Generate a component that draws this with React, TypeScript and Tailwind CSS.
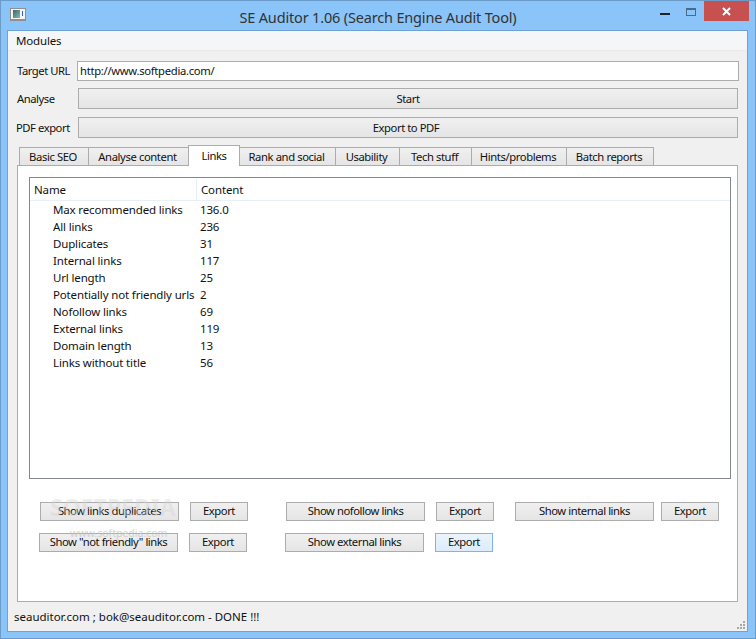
const rows = [
  ["Max recommended links", "136.0"],
  ["All links", "236"],
  ["Duplicates", "31"],
  ["Internal links", "117"],
  ["Url length", "25"],
  ["Potentially not friendly urls", "2"],
  ["Nofollow links", "69"],
  ["External links", "119"],
  ["Domain length", "13"],
  ["Links without title", "56"],
];

const tabs = [
  { label: "Basic SEO", width: "w-[70px]" },
  { label: "Analyse content", width: "w-[101px]" },
  { label: "Links", width: "w-[52px]", active: true },
  { label: "Rank and social", width: "w-[97px]" },
  { label: "Usability", width: "w-[65px]" },
  { label: "Tech stuff", width: "w-[73px]" },
  { label: "Hints/problems", width: "w-[96px]" },
  { label: "Batch reports", width: "w-[88px]" },
];

function Btn({ label, className, hot }: { label: string; className: string; hot?: boolean }) {
  return (
    <button
      className={
        "shrink-0 flex items-center justify-center border whitespace-nowrap text-[11.25px] tracking-[-0.45px] " +
        (hot
          ? "border-[#7eb4ea] bg-gradient-to-b from-[#ecf4fc] to-[#dcecfc] "
          : "border-[#acacac] bg-gradient-to-b from-[#f0f0f0] to-[#e5e5e5] ") +
        className
      }
    >
      {label}
    </button>
  );
}

export default function App() {
  return (
    <div className="w-[756px] h-[639px] flex flex-col overflow-hidden bg-[#8ac4f8] border border-[#6b9cc9] text-[11.5px] tracking-[-0.15px] leading-[16px] text-[#111] font-['Noto_Sans','Open_Sans',sans-serif]">
      <div className="h-[29px] shrink-0 grid grid-cols-[1fr_auto_1fr] items-start">
        <div className="ml-[9px] mt-[7px] w-[16px] h-[13px] border border-[#8f8f8f] border-b-2 bg-[#f4f4f4] flex items-center justify-between px-[2px]">
          <div className="w-[7px] h-[8px] bg-gradient-to-br from-[#2c6e6a] to-[#8fb5b0]" />
          <div className="w-[1px] h-[5px] bg-[#3a62c0] mb-[2px]" />
        </div>
        <div className="text-center text-[14.5px] tracking-[-0.17px] leading-[20px] mt-[6px] text-[#333]">
          SE Auditor 1.06 (Search Engine Audit Tool)
        </div>
        <div className="flex justify-end items-start">
          <div className="w-[10px] h-[2px] bg-[#222] mt-[12px] mr-[16px]" />
          <div className="w-[10px] h-[8px] mt-[7px] mr-[8px] border border-[#4a6a8a] border-t-2" />
          <div className="w-[45px] h-[20px] mr-[6px] bg-[#c75050] flex items-center justify-center">
            <svg width="9" height="9" viewBox="0 0 9 9">
              <path d="M1 1l7 7M8 1l-7 7" stroke="#fff" strokeWidth="2" />
            </svg>
          </div>
        </div>
      </div>

      <div className="ml-[6px] mr-[7px] mb-[6px] flex-1 flex flex-col border border-[#6fa3d4] bg-[#f0f0f0]">
        <div className="h-[20px] shrink-0 bg-[#f5f6f7] border-b border-[#e8e9ea] pl-[8px] flex items-center">
          Modules
        </div>

        <div className="h-[20px] mt-[10px] flex items-center shrink-0 text-[11.25px] tracking-[-0.45px]">
          <div className="ml-[9px] w-[60px] whitespace-nowrap">Target URL</div>
          <div className="w-[662px] h-[20px] border border-[#acacac] bg-white pl-[2px] flex items-center tracking-[-0.3px]">
            http://www.softpedia.com/
          </div>
        </div>
        <div className="h-[21px] mt-[7px] flex items-center shrink-0 text-[11.25px] tracking-[-0.45px]">
          <div className="ml-[9px] w-[61px] whitespace-nowrap">Analyse</div>
          <Btn label="Start" className="w-[660px] h-[21px]" />
        </div>
        <div className="h-[21px] mt-[8px] flex items-center shrink-0 text-[11.25px] tracking-[-0.45px]">
          <div className="ml-[8px] w-[62px] whitespace-nowrap">PDF export</div>
          <Btn label="Export to PDF" className="w-[660px] h-[21px] pr-[4px]" />
        </div>

        <div className="mt-[7px] ml-[11px] flex items-end h-[21px] shrink-0 text-[11.25px] tracking-[-0.4px]">
          {tabs.map((t) => (
            <div
              key={t.label}
              className={
                "shrink-0 flex items-center justify-center border border-[#acacac] -mr-[1px] whitespace-nowrap " +
                t.width +
                (t.active
                  ? " h-[21px] bg-white border-b-0 relative z-10"
                  : " h-[19px] pr-[2px] bg-gradient-to-b from-[#f0f0f0] to-[#e5e5e5]")
              }
            >
              {t.label}
            </div>
          ))}
        </div>

        <div className="ml-[9px] -mt-[1px] w-[721px] h-[437px] shrink-0 border border-[#acacac] bg-white flex flex-col">
          <div className="mt-[11px] ml-[11px] w-[702px] h-[302px] shrink-0 border border-[#828790] bg-white">
            <div className="h-[23px] flex border-b border-[#e5f0fb] pt-[1px]">
              <div className="w-[167px] pl-[4px] flex items-center border-r border-[#e5f0fb]">Name</div>
              <div className="pl-[4px] flex items-center">Content</div>
            </div>
            <div>
              {rows.map(([name, value]) => (
                <div key={name} className="h-[17px] flex items-center">
                  <div className="w-[170px] pl-[23px] whitespace-nowrap">{name}</div>
                  <div>{value}</div>
                </div>
              ))}
            </div>
          </div>

          <div className="relative">
            <div className="mt-[23px] flex h-[19px]">
              <Btn label="Show links duplicates" className="ml-[22px] w-[139px] pb-[1px]" />
              <Btn label="Export" className="ml-[11px] w-[58px] pb-[1px]" />
              <Btn label="Show nofollow links" className="ml-[38px] w-[139px] pb-[1px]" />
              <Btn label="Export" className="ml-[11px] w-[58px] pb-[1px]" />
              <Btn label="Show internal links" className="ml-[21px] w-[139px] pb-[1px]" />
              <Btn label="Export" className="ml-[7px] w-[58px] pb-[1px]" />
            </div>
            <div className="mt-[12px] flex h-[19px]">
              <Btn label={'Show "not friendly" links'} className="ml-[21px] w-[139px] pb-[1px]" />
              <Btn label="Export" className="ml-[11px] w-[58px] pb-[1px]" />
              <Btn label="Show external links" className="ml-[38px] w-[139px] pb-[1px]" />
              <Btn label="Export" hot className="ml-[11px] w-[58px] pb-[1px]" />
            </div>
            {/* softpedia watermark sits over the buttons */}
            <div className="absolute left-[32px] top-[14px] text-[23px] leading-[28px] tracking-[0px] font-bold text-[#d4d4d4] opacity-40 pointer-events-none whitespace-nowrap">
              SOFTPEDIA
            </div>
            <div className="absolute left-[52px] top-[48px] text-[10.5px] leading-[12px] tracking-[0px] text-[#c4c4c4] opacity-70 pointer-events-none whitespace-nowrap">
              www.softpedia.com
            </div>
          </div>
        </div>

        <div className="flex-1 flex items-center pl-[6px] pt-[1px] relative tracking-[-0.01px]">
          seauditor.com ; bok@seauditor.com - DONE !!!
          <svg className="absolute right-[2px] bottom-[2px]" width="9" height="9" viewBox="0 0 9 9" fill="#a8a8a8">
            <rect x="7" y="1" width="2" height="2" />
            <rect x="4" y="4" width="2" height="2" />
            <rect x="7" y="4" width="2" height="2" />
            <rect x="1" y="7" width="2" height="2" />
            <rect x="4" y="7" width="2" height="2" />
            <rect x="7" y="7" width="2" height="2" />
          </svg>
        </div>
      </div>
    </div>
  );
}
